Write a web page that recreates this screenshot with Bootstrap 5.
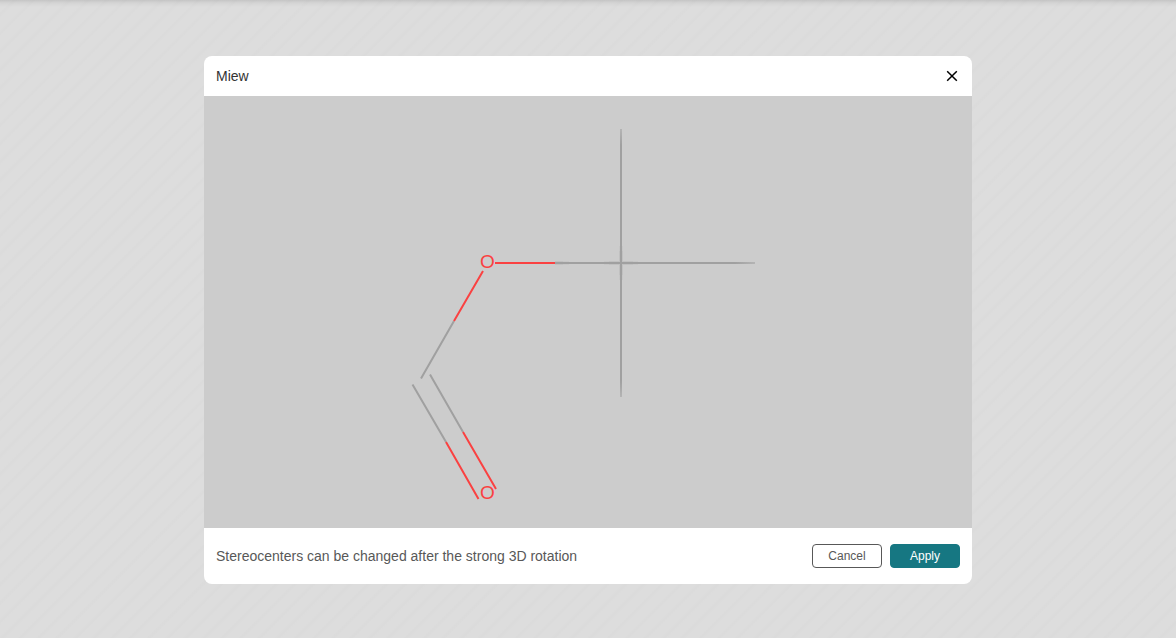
<!DOCTYPE html>
<html lang="en">
<head>
<meta charset="utf-8">
<meta name="viewport" content="width=device-width, initial-scale=1">
<title>Miew</title>
<link href="https://cdn.jsdelivr.net/npm/bootstrap@5.3.0/dist/css/bootstrap.min.css" rel="stylesheet">
<style>
  body {
    font-family: "Liberation Sans", Arial, sans-serif;
    font-size: 14px;
    line-height: 20px;
    color: #333;
    background-color: #ddd;
    background-image:
      linear-gradient(to bottom, rgba(0, 0, 0, .11), rgba(0, 0, 0, .04) 3px, transparent 7px),
      repeating-linear-gradient(135deg, #dddddd 0 8px, #dbdbdb 10px 11px, #dddddd 13px);
  }
  .viewer-dialog { max-width: 768px; margin-top: 2px; border-radius: 8px; }
  .viewer-header { height: 40px; padding: 0 12px; }
  .viewer-title { font-size: 14px; line-height: 20px; font-weight: 400; }
  .viewer-close { width: 16px; height: 16px; color: #000; }
  .viewer-scene { background: #ccc; aspect-ratio: 16 / 9; }
  .viewer-scene text {
    font-family: "Liberation Sans", Arial, sans-serif;
    font-size: 19px;
    fill: #fa4141;
    text-anchor: middle;
  }
  .viewer-footer { min-height: 56px; padding: 0 12px; color: #585858; }
  .viewer-btn {
    --bs-btn-font-size: 12px;
    --bs-btn-line-height: 22px;
    --bs-btn-padding-y: 0;
    --bs-btn-padding-x: 8px;
    --bs-btn-border-radius: 4px;
    width: 70px;
  }
  .viewer-cancel {
    --bs-btn-color: #585858;
    --bs-btn-border-color: #585858;
    --bs-btn-hover-color: #333;
    --bs-btn-hover-border-color: #333;
  }
  .viewer-apply {
    --bs-btn-color: #fff;
    --bs-btn-bg: #167782;
    --bs-btn-border-color: #167782;
    --bs-btn-hover-color: #fff;
    --bs-btn-hover-bg: #115d66;
    --bs-btn-hover-border-color: #115d66;
  }
</style>
</head>
<body class="min-vh-100 d-flex align-items-center justify-content-center">
<main class="viewer-dialog w-100 bg-white overflow-hidden" role="dialog" aria-labelledby="viewerTitle">
  <header class="viewer-header d-flex align-items-center justify-content-between">
    <h1 id="viewerTitle" class="viewer-title m-0">Miew</h1>
    <button type="button" class="viewer-close btn p-0 border-0 d-flex" aria-label="Close">
      <svg width="16" height="16" viewBox="0 0 16 16" fill="none" stroke="currentColor" stroke-width="1.5" aria-hidden="true">
        <path d="M3.2 3.2 12.8 12.8M12.8 3.2 3.2 12.8"/>
      </svg>
    </button>
  </header>

  <div class="viewer-scene">
    <svg class="d-block w-100 h-100" viewBox="0 0 768 432" fill="none" stroke-width="2" role="img" aria-label="3D molecule">
      <defs>
        <linearGradient id="armDown" gradientUnits="userSpaceOnUse" x1="0" y1="33" x2="0" y2="301">
          <stop offset="0" stop-color="#b4b4b4"/><stop offset=".06" stop-color="#a0a0a0"/>
          <stop offset=".94" stop-color="#a0a0a0"/><stop offset="1" stop-color="#b4b4b4"/>
        </linearGradient>
        <linearGradient id="armRight" gradientUnits="userSpaceOnUse" x1="351" y1="0" x2="551" y2="0">
          <stop offset=".9" stop-color="#a0a0a0"/><stop offset="1" stop-color="#b4b4b4"/>
        </linearGradient>
      </defs>
      <!-- tert-butyl carbon with its methyl arms -->
      <path stroke="#b8b8b8" stroke-width="4" stroke-opacity=".6" d="M405 167h24M417 155v24M351 167h8"/>
      <path stroke="#c0c0c0" stroke-width="4" stroke-opacity=".5" d="M400 167h34M417 150v34M351 167h14"/>
      <path fill="url(#armDown)" d="M416 33h2v268h-2z"/>
      <path fill="url(#armRight)" d="M351 166h200v2h-200z"/>
      <!-- carbon halves of the ester and carbonyl bonds -->
      <path stroke="#a0a0a0" d="M250 225 217 282.500M208.500 288.500 242 346M226 278.500 259 336"/>
      <!-- oxygen halves -->
      <path stroke="#fa4141" d="M291 167h60M279 175 250 225M242 346 274.500 403M259 336 292 393"/>
      <text x="283.500" y="172">O</text>
      <text x="283.500" y="403">O</text>
    </svg>
  </div>

  <footer class="viewer-footer d-flex flex-wrap align-items-center justify-content-between gap-2">
    <span>Stereocenters can be changed after the strong 3D rotation</span>
    <div class="d-flex gap-2">
      <button type="button" class="viewer-btn viewer-cancel btn">Cancel</button>
      <button type="button" class="viewer-btn viewer-apply btn">Apply</button>
    </div>
  </footer>
</main>
<script src="https://cdn.jsdelivr.net/npm/bootstrap@5.3.0/dist/js/bootstrap.bundle.min.js"></script>
</body>
</html>
